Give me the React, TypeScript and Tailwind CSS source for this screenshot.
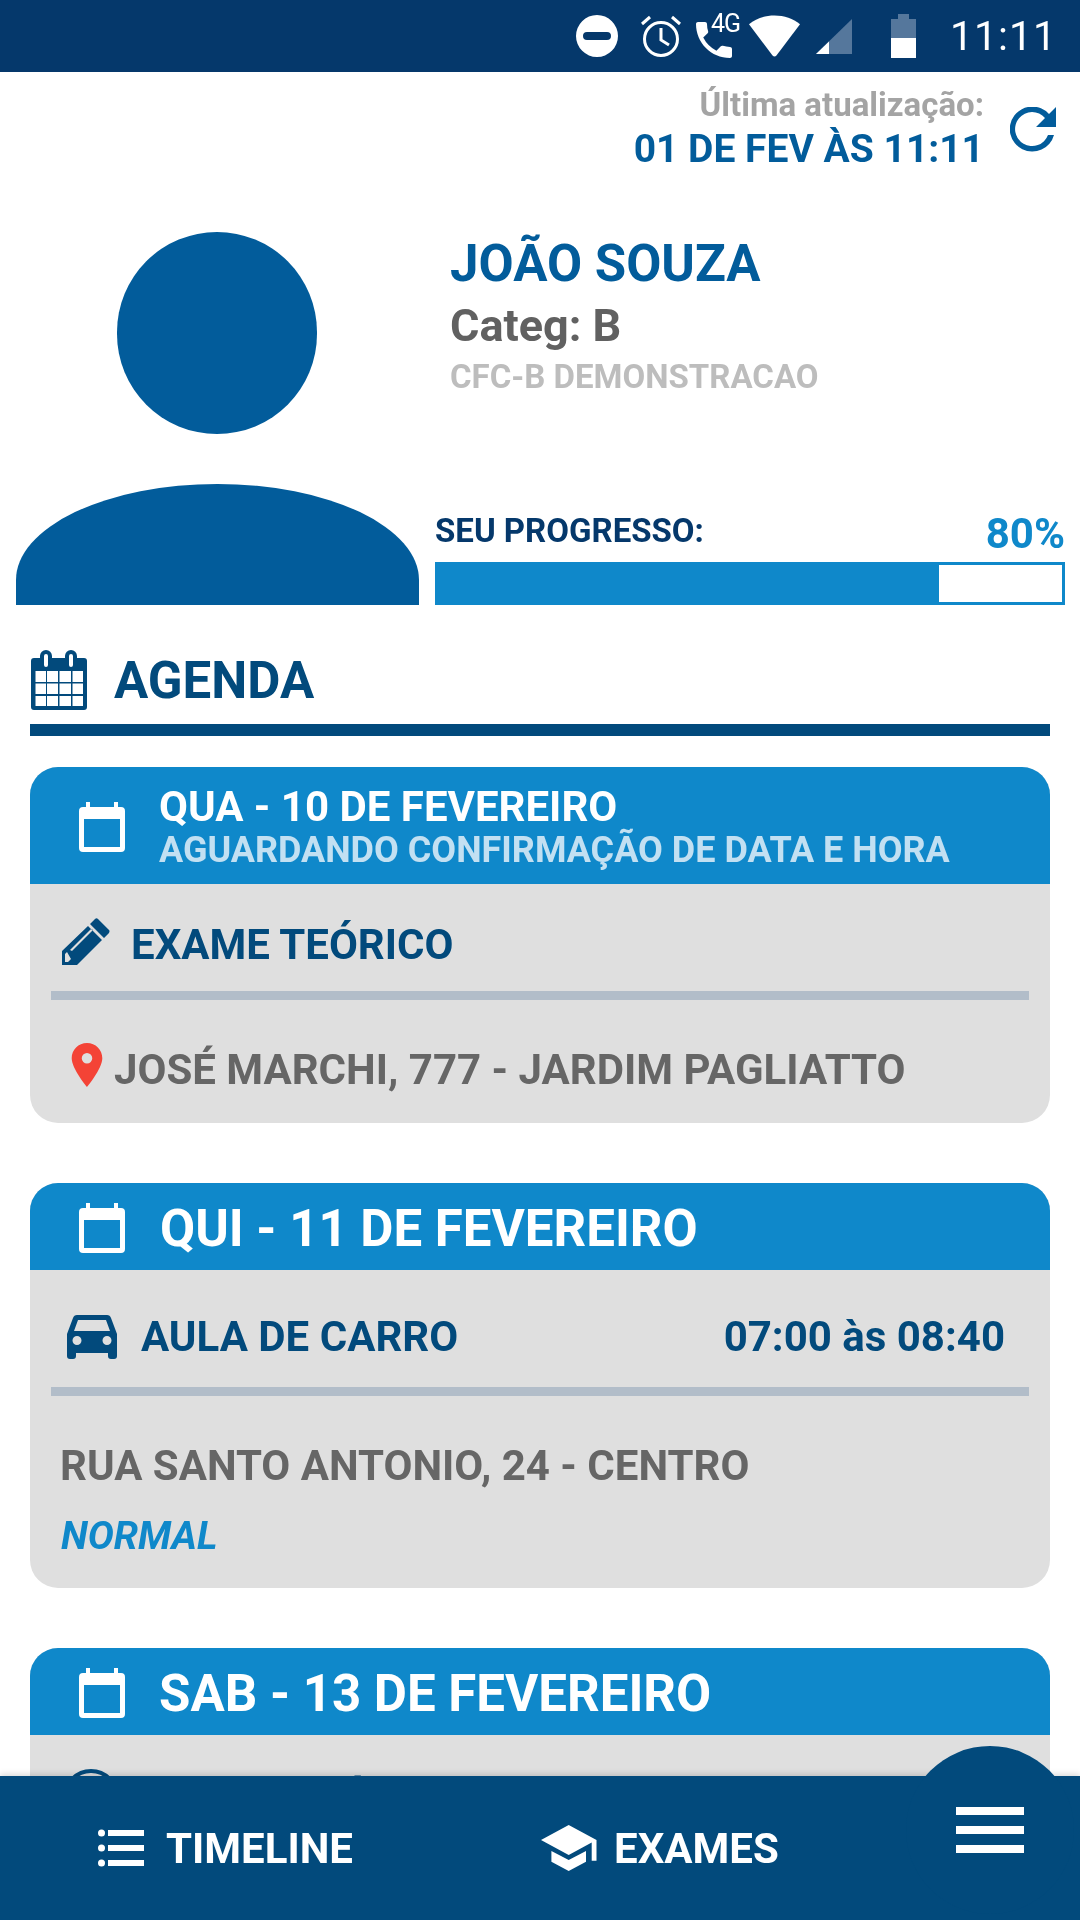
const navy = "text-[#024a7c]";

function CalendarOutline({ className = "" }: { className?: string }) {
  return (
    <svg viewBox="0 0 46 50" className={`w-[46px] h-[50px] shrink-0 ${className}`}>
      <path
        d="M7 0h4v5h24V0h4v5h3a4 4 0 0 1 4 4v37a4 4 0 0 1-4 4H4a4 4 0 0 1-4-4V9a4 4 0 0 1 4-4h3z M5 17v28h36V17z"
        fill="#fff"
        fillRule="evenodd"
      />
    </svg>
  );
}

function CalendarGrid() {
  return (
    <svg viewBox="0 0 56 60" className="w-[56px] h-[60px] shrink-0">
      <path
        fill="#024a7c"
        fillRule="evenodd"
        d="M3 8h6V6a6 6 0 0 1 12 0v2h13V6a6 6 0 0 1 12 0v2h7a3 3 0 0 1 3 3v46a3 3 0 0 1-3 3H3a3 3 0 0 1-3-3V11a3 3 0 0 1 3-3zM13 6v9a2 2 0 0 0 4 0V6a2 2 0 0 0-4 0zM38 6v9a2 2 0 0 0 4 0V6a2 2 0 0 0-4 0zM4.500 21v11H15V21zM16 21v11h11V21zM28.500 21v11H40V21zM41.500 21v11H52V21zM4.500 33.500V44H15V33.500zM16 33.500V44h11V33.500zM28.500 33.500V44H40V33.500zM41.500 33.500V44H52V33.500zM4.500 46v10H15V46zM16 46v10h11V46zM28.500 46v10H40V46zM41.500 46v10H52V46z"
      />
    </svg>
  );
}

function Pencil() {
  return (
    <svg viewBox="0 0 48 48" className="w-[48px] h-[48px] shrink-0 mt-[-6px]">
      <path
        fill="#024a7c"
        fillRule="evenodd"
        d="M36 1 47 12q1 1 0 3l-5 5L28 6l5-5q1.500-1.500 3 0zM26 8l14 14L15 47 H0V33zM5 34l-2 2v8h3l3-3zM8 32l2 1 21-21-2-1z"
      />
    </svg>
  );
}

function Pin() {
  return (
    <svg viewBox="0 0 32 46" className="w-[32px] h-[44px] shrink-0 mt-[-10px]">
      <path
        fill="#f44336"
        fillRule="evenodd"
        d="M16 0C7 0 0 7 0 16c0 11 16 30 16 30s16-19 16-30C32 7 25 0 16 0zm0 10.500a5.500 5.500 0 1 1 0 11 5.500 5.500 0 0 1 0-11z"
      />
    </svg>
  );
}

function Car() {
  return (
    <svg viewBox="0 0 50 44" className="w-[50px] h-[44px] shrink-0">
      <path
        fill="#024a7c"
        fillRule="evenodd"
        d="M10 0h30q3 0 4 3l6 16v22q0 3-3 3h-3q-3 0-3-3v-3H9v3q0 3-3 3H3q-3 0-3-3V19L6 3q1-3 4-3zM7 16h36L39 5H11zM10 21a4 4 0 1 0 0 9 4 4 0 0 0 0-9zM40 21a4 4 0 1 0 0 9 4 4 0 0 0 0-9z"
      />
    </svg>
  );
}

function StatusBar() {
  return (
    <div className="h-[72px] bg-[#05386b] flex items-center justify-end pr-[23px] shrink-0">
      <svg viewBox="0 0 42 42" className="w-[42px] h-[42px] mr-[22px]">
        <path fill="#fff" fillRule="evenodd" d="M21 0a21 21 0 1 0 0 42 21 21 0 0 0 0-42zM11 17h20a4 4 0 0 1 0 8H11a4 4 0 0 1 0-8z" />
      </svg>
      <svg viewBox="0 0 42 42" className="w-[42px] h-[42px] mr-[14px]" fill="none" stroke="#fff" strokeWidth="3">
        <circle cx="21" cy="24" r="16.500" />
        <path d="M21 13v12l8 5M2 9l8-7M40 9l-8-7" />
      </svg>
      <div className="relative w-[43px] h-[44px] mr-[10px]">
        <svg viewBox="3 3 18 18" className="absolute left-0 top-[8px] w-[36px] h-[36px]">
          <path
            fill="#fff"
            d="M20 15.500c-1.250 0-2.450-.200-3.570-.570a1.020 1.020 0 0 0-1.020.240l-2.200 2.200a15.045 15.045 0 0 1-6.590-6.590l2.200-2.210a.960.960 0 0 0 .250-1A11.360 11.360 0 0 1 8.500 4c0-.550-.450-1-1-1H4c-.550 0-1 .450-1 1 0 9.390 7.610 17 17 17 .550 0 1-.450 1-1v-3.500c0-.550-.450-1-1-1z"
          />
        </svg>
        <span className="absolute left-[15px] top-[-5px] text-[25px] leading-[30px] tracking-[-1px] text-white">4G</span>
      </div>
      <svg viewBox="0 0 52 42" className="w-[51px] h-[42px] mr-[16px]">
        <path fill="#fff" d="M26 0C16 0 7 3 0 9l24 32q2 2 4 0L52 9C45 3 36 0 26 0z" />
      </svg>
      <svg viewBox="0 0 36 36" className="w-[36px] h-[36px] mr-[39px]">
        <path fill="#55779c" d="M36 1v35H0z" />
        <path fill="#fff" d="M13 23.500V36H0z" />
      </svg>
      <div className="w-[25px] h-[44px] mr-[34px] flex flex-col items-center">
        <div className="w-[11px] h-[5px] bg-[#55779c]" />
        <div className="w-[25px] h-[19px] bg-[#55779c]" />
        <div className="w-[25px] h-[20px] bg-white" />
      </div>
      <span className="text-[41px] leading-none text-white tracking-[1px]">11:11</span>
    </div>
  );
}

function UpdateRow() {
  return (
    <div className="flex justify-end items-start pt-[14px] pr-[24px] h-[114px] shrink-0">
      <div className="text-right mr-[26px]">
        <div className="text-[33px] leading-[38px] font-bold text-[#a4a4a4]">Última atualização:</div>
        <div className="text-[39px] leading-[42px] font-bold text-[#025c9b] mt-[4px]">01 DE FEV ÀS 11:11</div>
      </div>
      <svg viewBox="0 0 46 46" className="w-[46px] h-[46px] mt-[21px]">
        <path fill="#025c9b" d="M39 7A22.500 22.500 0 1 0 44 28h-6a17 17 0 1 1-3-17l-9 9h20V0z" />
      </svg>
    </div>
  );
}

function Profile() {
  return (
    <div className="flex pl-[16px] pr-[15px] h-[419px] shrink-0">
      <div className="w-[403px] shrink-0 flex flex-col items-center justify-end">
        <div className="w-[200px] h-[202px] rounded-full bg-[#025c9b] mb-[50px] mr-[1px]" />
        <div className="w-[403px] h-[121px] bg-[#025c9b] rounded-t-[201.5px_96px]" />
      </div>
      <div className="flex-1 ml-[16px] flex flex-col relative">
        <div className="pl-[15px] pt-[50px]">
          <div className="text-[51px] leading-[56px] font-bold text-[#025c9b]">JOÃO SOUZA</div>
          <div className="text-[45px] leading-[50px] font-bold text-[#616161] mt-[9px]">Categ: B</div>
          <div className="text-[33px] leading-[38px] font-bold text-[#bdbdbd] mt-[7px]">CFC-B DEMONSTRACAO</div>
        </div>
        <div className="mt-auto">
          <div className="flex justify-between items-end mb-[10px]">
            <span className="text-[33px] leading-[38px] font-bold text-[#05386b] mb-[2px]">SEU PROGRESSO:</span>
            <span className="text-[42px] leading-[36px] font-bold text-[#0f88ca]">80%</span>
          </div>
          <div className="h-[43px] border-[3px] border-[#0f88ca] bg-white">
            <div className="h-full w-[501px] bg-[#0f88ca]" />
          </div>
        </div>
      </div>
    </div>
  );
}

function CardHeader({ children, height }: { children: React.ReactNode; height: string }) {
  return (
    <div className={`${height} bg-[#0f88ca] rounded-t-[28px] flex items-center pl-[49px]`}>
      <CalendarOutline className="mt-[3px]" />
      {children}
    </div>
  );
}

function Rule() {
  return <div className="h-[9px] bg-[#b2bdc9] mx-[21px]" />;
}

export default function App() {
  return (
    <div className="w-[1080px] h-[1920px] overflow-hidden relative bg-white flex flex-col font-[Roboto,sans-serif] will-change-transform">
      <StatusBar />
      <UpdateRow />
      <Profile />

      <div className="px-[30px] mt-[44px] shrink-0">
        <div className="flex items-center h-[62px] pl-[1px]">
          <CalendarGrid />
          <span className={`ml-[27px] text-[51px] leading-none font-bold ${navy}`}>AGENDA</span>
        </div>
        <div className="h-[12px] bg-[#024a7c] mt-[13px]" />

        <div className="mt-[31px] rounded-[28px] bg-[#dfdfdf] h-[356px]">
          <CardHeader height="h-[117px]">
            <div className="ml-[34px] pt-[4px]">
              <div className="text-[42px] leading-[44px] font-bold text-white">QUA - 10 DE FEVEREIRO</div>
              <div className="text-[36px] leading-[42px] font-bold text-[#c2e0f2]">AGUARDANDO CONFIRMAÇÃO DE DATA E HORA</div>
            </div>
          </CardHeader>
          <div className="flex items-center h-[107px] pl-[32px] pt-[14px]">
            <Pencil />
            <span className={`ml-[21px] text-[42px] font-bold ${navy}`}>EXAME TEÓRICO</span>
          </div>
          <Rule />
          <div className="flex items-center h-[123px] pl-[41px] pt-[16px]">
            <Pin />
            <span className="ml-[11px] text-[42px] font-bold text-[#666]">JOSÉ MARCHI, 777 - JARDIM PAGLIATTO</span>
          </div>
        </div>

        <div className="mt-[60px] rounded-[28px] bg-[#dfdfdf] h-[405px]">
          <CardHeader height="h-[87px]">
            <span className="ml-[35px] pt-[5px] text-[51px] font-bold text-white">QUI - 11 DE FEVEREIRO</span>
          </CardHeader>
          <div className="flex items-center h-[117px] pl-[37px] pr-[45px] pt-[16px]">
            <Car />
            <span className={`ml-[24px] text-[42px] font-bold ${navy}`}>AULA DE CARRO</span>
            <span className={`ml-auto text-[42px] font-bold ${navy}`}>07:00 às 08:40</span>
          </div>
          <Rule />
          <div className="pl-[30px] pt-[46px]">
            <div className="text-[42px] leading-[48px] font-bold text-[#666]">RUA SANTO ANTONIO, 24 - CENTRO</div>
            <div className="text-[39px] leading-[44px] font-bold italic text-[#0f88ca] mt-[24px] ml-[1px]">NORMAL</div>
          </div>
        </div>

        <div className="mt-[60px] rounded-t-[28px] bg-[#dfdfdf] h-[200px]">
          <CardHeader height="h-[87px]">
            <span className="ml-[34px] pt-[5px] text-[51px] font-bold text-white">SAB - 13 DE FEVEREIRO</span>
          </CardHeader>
          <div className="flex items-center h-[107px] pl-[33px] pt-[22px]">
            <svg viewBox="0 0 56 56" className="w-[56px] h-[56px] shrink-0 mt-[-5px]" fill="none" stroke="#024a7c" strokeWidth="4">
              <circle cx="28" cy="28" r="26" />
            </svg>
            <span className={`ml-[17px] text-[42px] font-bold ${navy}`}>EXAME PRÁTICO</span>
          </div>
        </div>
      </div>

      {/* barra inferior */}
      <div className="absolute left-0 right-0 bottom-0 h-[144px] bg-[#024a7c] shadow-[0_-2px_6px_rgba(0,0,0,0.15)] flex items-center">
        <div className="flex items-center ml-[98px] w-[443px]">
          <svg viewBox="0 0 46 38" className="w-[46px] h-[38px]">
            <path fill="#fff" d="M10 1h36v6H10zM10 16h36v6H10zM10 31h36v6H10z" />
            <circle cx="3.500" cy="4" r="3.500" fill="#fff" />
            <circle cx="3.500" cy="19" r="3.500" fill="#fff" />
            <circle cx="3.500" cy="34" r="3.500" fill="#fff" />
          </svg>
          <span className="ml-[22px] text-[42px] font-bold text-white">TIMELINE</span>
        </div>
        <div className="flex items-center">
          <svg viewBox="0 0 56 46" className="w-[56px] h-[46px]">
            <path fill="#fff" d="M27.700 0 55.500 15V35.700H50.700V17.600L27.700 30 0 15zM10.400 26 27.700 35 45 26V36.700L27.700 46 10.400 36.700z" />
          </svg>
          <span className="ml-[17px] text-[42px] font-bold text-white">EXAMES</span>
        </div>
      </div>
      <div className="absolute left-[906px] top-[1746px] w-[168px] h-[168px] rounded-full bg-[#024a7c]" />
      <div className="absolute left-[956px] top-[1807px] w-[68px] flex flex-col gap-[11px]">
        <div className="h-[8px] bg-white" />
        <div className="h-[8px] bg-white" />
        <div className="h-[8px] bg-white" />
      </div>
    </div>
  );
}
